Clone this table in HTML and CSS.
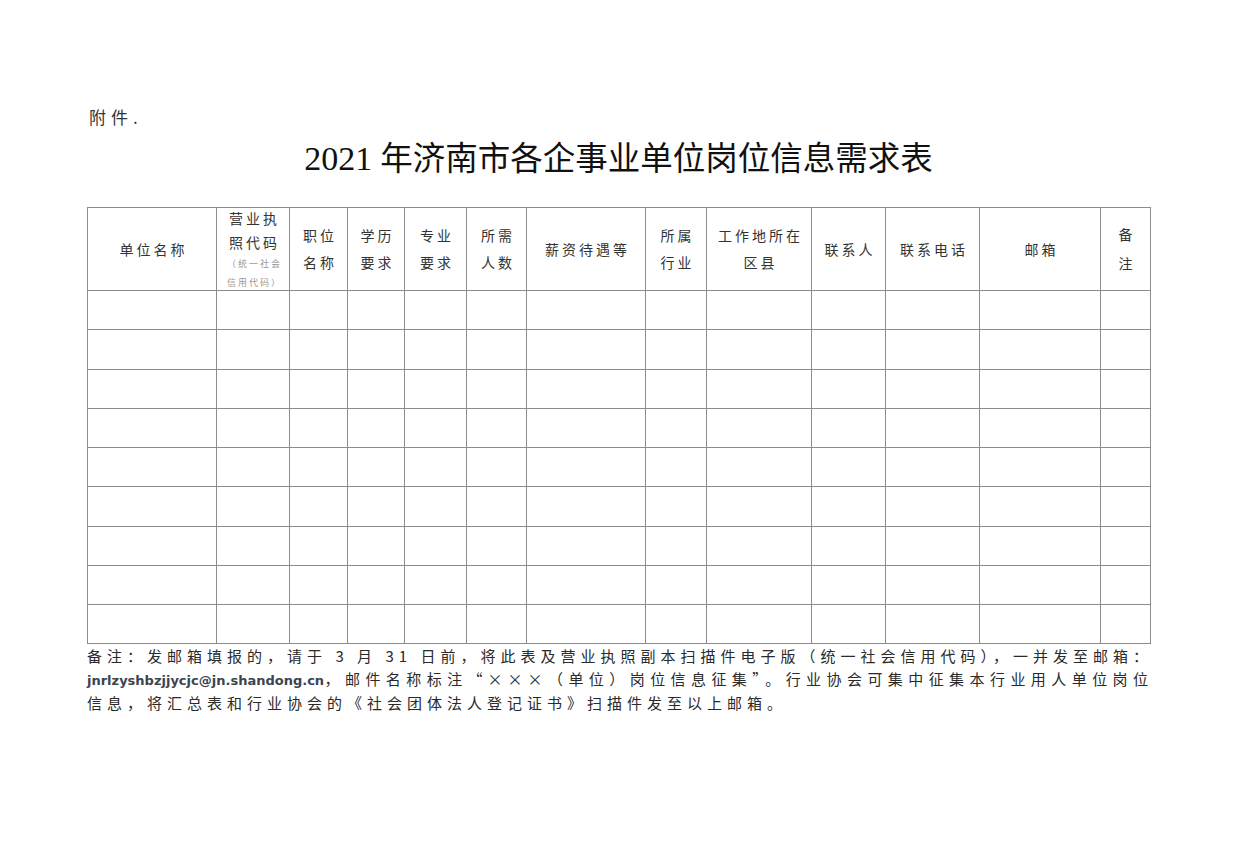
FILE: index.html
```html
<!DOCTYPE html>
<html lang="zh-CN">
<head>
<meta charset="utf-8">
<title>2021年济南市各企事业单位岗位信息需求表</title>
<link rel="stylesheet" href="styles.css">
</head>
<body>
<div class="page">
  <div class="attach">附件.</div>
  <h1 class="title"><span class="num">2021</span> 年济南市各企事业单位岗位信息需求表</h1>
  <table class="grid">
    <colgroup>
      <col style="width:129px"><col style="width:73px"><col style="width:58px"><col style="width:57px">
      <col style="width:62px"><col style="width:60px"><col style="width:119px"><col style="width:61px">
      <col style="width:105px"><col style="width:74px"><col style="width:94px"><col style="width:121px">
      <col style="width:50px">
    </colgroup>
    <thead>
      <tr class="head">
        <th>单位名称</th>
        <th><div class="license"><div class="big">营业执</div><div class="big">照代码</div><div class="small">（统一社会</div><div class="small">信用代码）</div></div></th>
        <th>职位<br>名称</th>
        <th>学历<br>要求</th>
        <th>专业<br>要求</th>
        <th>所需<br>人数</th>
        <th>薪资待遇等</th>
        <th>所属<br>行业</th>
        <th>工作地所在<br>区县</th>
        <th>联系人</th>
        <th>联系电话</th>
        <th>邮箱</th>
        <th class="tall">备<br>注</th>
      </tr>
    </thead>
    <tbody>
      <tr><td></td><td></td><td></td><td></td><td></td><td></td><td></td><td></td><td></td><td></td><td></td><td></td><td></td></tr>
      <tr><td></td><td></td><td></td><td></td><td></td><td></td><td></td><td></td><td></td><td></td><td></td><td></td><td></td></tr>
      <tr><td></td><td></td><td></td><td></td><td></td><td></td><td></td><td></td><td></td><td></td><td></td><td></td><td></td></tr>
      <tr><td></td><td></td><td></td><td></td><td></td><td></td><td></td><td></td><td></td><td></td><td></td><td></td><td></td></tr>
      <tr><td></td><td></td><td></td><td></td><td></td><td></td><td></td><td></td><td></td><td></td><td></td><td></td><td></td></tr>
      <tr><td></td><td></td><td></td><td></td><td></td><td></td><td></td><td></td><td></td><td></td><td></td><td></td><td></td></tr>
      <tr><td></td><td></td><td></td><td></td><td></td><td></td><td></td><td></td><td></td><td></td><td></td><td></td><td></td></tr>
      <tr><td></td><td></td><td></td><td></td><td></td><td></td><td></td><td></td><td></td><td></td><td></td><td></td><td></td></tr>
      <tr><td></td><td></td><td></td><td></td><td></td><td></td><td></td><td></td><td></td><td></td><td></td><td></td><td></td></tr>
    </tbody>
  </table>
  <div class="notes">
    <div class="line just">备注：发邮箱填报的，请于 3 月 31 日前，将此表及营业执照副本扫描件电子版（统一社会信用代码），一并发至邮箱：</div>
    <div class="line just"><span class="mail">jnrlzyshbzjjycjc@jn.shandong.cn</span>，邮件名称标注“×××（单位）岗位信息征集”。行业协会可集中征集本行业用人单位岗位</div>
    <div class="line">信息，将汇总表和行业协会的《社会团体法人登记证书》扫描件发至以上邮箱。</div>
  </div>
</div>
</body>
</html>
```
FILE: styles.css
```css
html, body {
  margin: 0;
  padding: 0;
  background: #ffffff;
}

body {
  font-family: "Noto Sans CJK SC", "Noto Sans", sans-serif;
  color: #2a2a2a;
}

.page {
  width: 1066px;
  padding: 107px 0 0 87px;
}

.attach {
  font-size: 17px;
  line-height: 20px;
  letter-spacing: 5px;
  padding-left: 2px;
  color: #333;
  font-weight: 400;
}

.title {
  margin: 12px 0 0 0;
  width: 1063px;
  text-align: center;
  font-family: "Liberation Serif", "Noto Sans CJK SC", serif;
  font-size: 32.5px;
  line-height: 40px;
  font-weight: 400;
  color: #111;
}

.title .num {
  font-family: "Liberation Serif", serif;
  font-size: 34px;
}

.grid {
  margin-top: 28px;
  width: 1063px;
  table-layout: fixed;
  border-collapse: collapse;
}

.grid th,
.grid td {
  border: 1px solid #8c8c8c;
  padding: 0;
}

.grid th {
  height: 82px;
  font-size: 14px;
  line-height: 27px;
  font-weight: 400;
  letter-spacing: 3px;
  padding-left: 3px;
  text-align: center;
  vertical-align: middle;
  color: #333;
}

.grid th.tall {
  line-height: 29px;
}

.license {
  margin: -3px 0;
}

.license .big {
  line-height: 24px;
}

.license .small {
  font-size: 9px;
  line-height: 19px;
  letter-spacing: 2px;
  color: #9a9a9a;
}

.grid td {
  height: 38.25px;
}

.notes {
  margin-top: 1px;
  width: 1066px;
  font-size: 15px;
  line-height: 22.5px;
  letter-spacing: 5px;
  color: #2a2a2a;
}

.line {
  white-space: nowrap;
}

.line.just {
  text-align: justify;
  text-align-last: justify;
  white-space: normal;
}

.mail {
  font-family: "DejaVu Sans", sans-serif;
  font-weight: 700;
  font-size: 13px;
  letter-spacing: 0;
  color: #3b4450;
}
```
